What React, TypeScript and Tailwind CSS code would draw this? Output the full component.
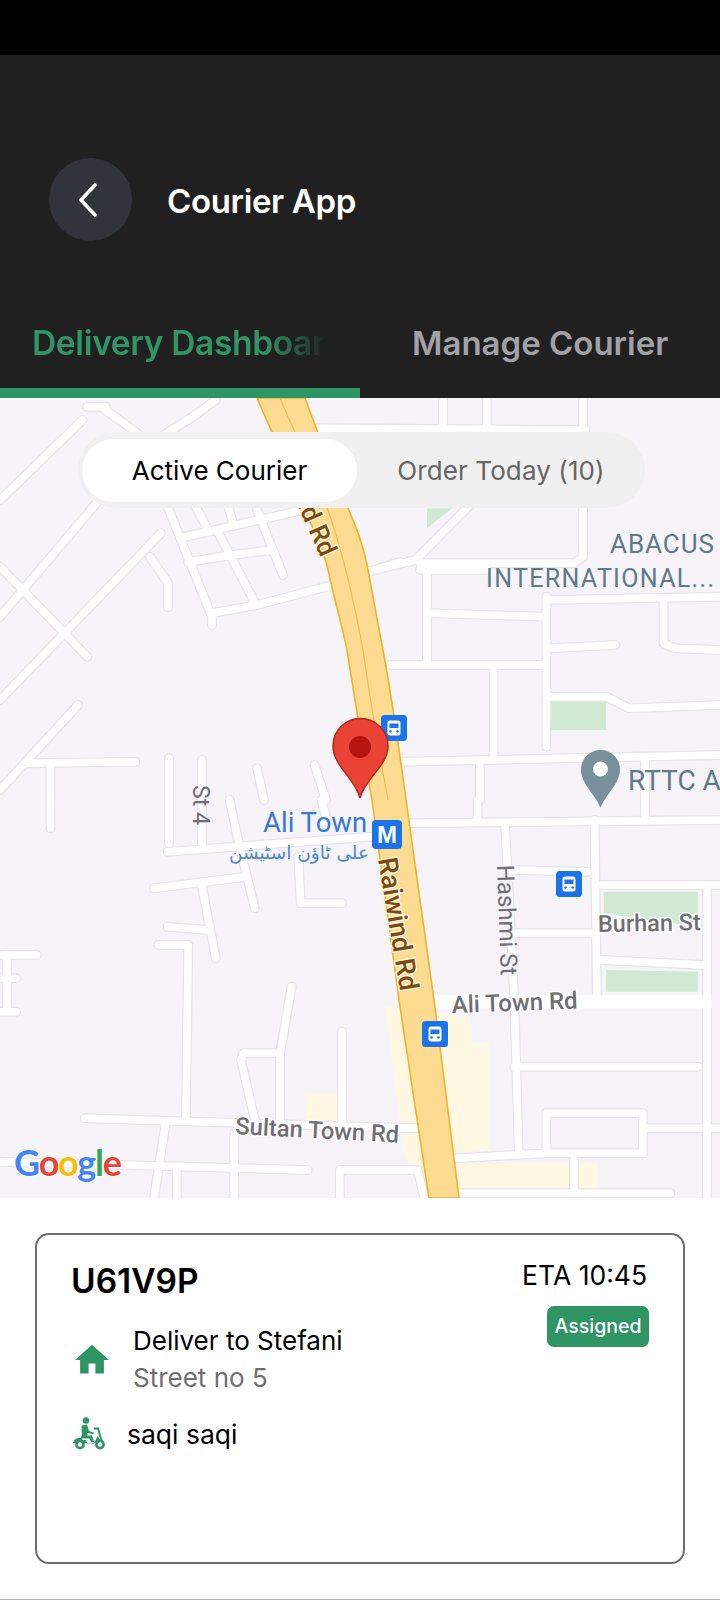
import React from "react";

const z2 = (s: string) =>
  s.split(" ").map((p) => { const [x, y] = p.split(",").map(Number); return `${(x / 2.178).toFixed(1)},${(400 + y / 3).toFixed(1)}`; }).join(" ");
const z3 = (s: string) =>
  s.split(" ").map((p) => { const [x, y] = p.split(",").map(Number); return `${(x / 2.178).toFixed(1)},${(800 + y / 3).toFixed(1)}`; }).join(" ");

const roads: string[] = [
  "167,505 212,617 212,625", "213,613 257,605 333,585", "180,538 303,510", "188,562 233,555 272,550",
  "218,532 255,603", "257,510 283,575", "195,505 207,528", "228,505 233,523",
  "150,557 168,583 168,607", "368,572 400,562",
  ...[
    "680,85 1275,90", "965,0 965,85", "1060,0 1060,90", "1270,0 1270,100",
    "1270,320 1270,470 1250,490 915,490", "1020,320 905,480 800,515",
    "180,60 0,300", "220,20 300,100", "190,20 230,20", "420,50 340,120", "470,0 420,50",
    "0,500 190,770", "0,650 210,310", "0,900 350,400",
    "930,510 930,780", "850,795 1190,795", "940,640 1185,650", "1190,590 1190,1040", "1190,600 1568,590",
    "1195,745 1340,735", "1445,610 1445,730 1470,745 1568,750", "1190,890 1320,890 1370,925 1568,915",
    "1075,800 1075,1080", "870,1085 1568,1065", "915,510 1060,510", "1045,1090 1045,1200", "1405,1080 1405,1200",
    "170,915 60,1080 0,1170", "60,1090 295,1085", "110,1100 110,1200", "368,1075 368,1200", "440,1080 440,1200",
    "560,1105 575,1200", "685,1095 710,1200",
  ].map(z2),
  ...[
    "110,0 110,85", "368,0 368,130", "440,0 440,130", "500,0 520,130 555,325", "700,0 710,50",
    "365,155 810,110", "335,265 535,230", "440,260 470,475", "365,380 450,390", "650,170 655,310 745,310",
    "345,435 410,435 405,950", "0,465 80,465", "0,535 35,535", "0,635 35,635", "15,465 15,635",
    "635,560 610,760 530,760 525,780 555,960", "610,760 610,970", "745,695 745,975",
    "185,955 905,985", "360,975 335,1200", "510,1000 510,1200", "0,1085 670,1110", "385,1100 385,1200",
    "740,1200 740,1110 910,1110 925,1200", "890,70 1568,60", "1100,75 1120,590 1130,1060", "1295,60 1300,590",
    "1115,210 1280,215", "1310,255 1568,255", "1125,400 1300,400", "1310,480 1530,495", "1540,270 1540,1200",
    "1120,800 1520,800", "995,1075 1190,1060 1190,940 1400,940 1400,1060", "1400,985 1568,985", "1000,1180 1460,1180",
    "1250,1080 1250,1170", "1405,0 1405,50", "1040,0 1040,55", "1190,1060 1400,1060",
  ].map(z3),
];

const BusIcon = ({ x, y }: { x: number; y: number }) => (
  <g transform={`translate(${x} ${y})`}>
    <rect width="26" height="26" rx="3.5" fill="#1a73e8" />
    <rect x="6.5" y="5.5" width="13" height="15" rx="2.5" fill="#fff" />
    <rect x="8.5" y="8.5" width="9" height="4.5" fill="#1a73e8" />
    <circle cx="9.5" cy="16.5" r="1.3" fill="#1a73e8" />
    <circle cx="16.5" cy="16.5" r="1.3" fill="#1a73e8" />
  </g>
);

const haloClass = "[paint-order:stroke] [stroke-linejoin:round]";

function MapArt() {
  return (
    <svg viewBox="0 398 720 800" className="block h-[800px] w-full bg-[#f6f4f8]" style={{ fontFamily: "Roboto, sans-serif" }}>
      {[
        z3("840,620 1020,650 1030,730 1065,730 1065,1050 990,1060 990,1190 930,1190 880,1060"),
        z3("665,880 735,880 735,970 665,960"),
        z3("1000,1090 1300,1090 1300,1165 1000,1165"),
      ].map((p) => <polygon key={p} points={p} fill="#fef8e3" />)}
      {[
        z3("1315,275 1520,275 1520,380 1315,340"),
        z3("1320,510 1520,515 1520,575 1320,575"),
        z2("1195,905 1320,905 1320,990 1195,990"),
        z2("930,325 985,325 930,385"),
      ].map((p) => <polygon key={p} points={p} fill="#cfe9d3" />)}

      {roads.map((r, i) => <polyline key={`o${i}`} points={r} fill="none" stroke="#e6e4e9" strokeWidth="10" strokeLinecap="round" strokeLinejoin="round" />)}
      {roads.map((r, i) => <polyline key={`i${i}`} points={r} fill="none" stroke="#ffffff" strokeWidth="7.5" strokeLinecap="round" strokeLinejoin="round" />)}
      <polyline points={z3("945,605 1550,605")} fill="none" stroke="#fff" strokeWidth="13" />

      <path
        d="M257 398 C 275 440 292 475 305 510 C 318 540 325 555 328 570 C 337 610 342 625 347 650 C 355 700 362 745 372 800 L 399 1000 L 429 1198 L 459 1198 L 434 1000 L 406 800 C 398 740 392 700 383 650 C 377 620 372 590 367 565 C 362 540 355 525 348 508 C 335 475 320 440 305 398 Z"
        fill="#fddb90" stroke="#edb32b" strokeWidth="1.6"
      />
      <path d="M280 398 C 300 445 318 480 328 510 C 340 545 352 590 363 650 C 370 700 378 745 388 800" fill="none" stroke="#e9bd58" strokeWidth="1.2" />

      <text textAnchor="end" transform="translate(321 558) rotate(66)" fontSize="26" fontWeight="500" fill="#7c4a0f" stroke="#fdf3dc" strokeWidth="3" className={haloClass}>Raiwind Rd</text>
      <text transform="translate(378 859) rotate(80.5)" fontSize="27" fontWeight="500" fill="#7c4a0f" stroke="#fdf3dc" strokeWidth="3" className={haloClass}>Raiwind Rd</text>

      <text x="714" y="553" textAnchor="end" fontSize="26" fill="#5f7a8a" textLength="104">ABACUS</text>
      <text x="714" y="587" textAnchor="end" fontSize="25" fill="#5f7a8a" textLength="228">INTERNATIONAL...</text>
      <text x="628" y="790" fontSize="28" fill="#5f7a8a">RTTC A</text>

      <text x="263" y="832" fontSize="27.5" fill="#3a78d4">Ali Town</text>
      <text x="369" y="859" direction="rtl" fontSize="18.5" fill="#4f86d8" style={{ fontFamily: "'DejaVu Sans', sans-serif" }}>علی ٹاؤن اسٹیشن</text>

      <text transform="translate(193 785) rotate(90)" fontSize="23" fill="#6f6f73" stroke="#f6f4f8" strokeWidth="3" className={haloClass}>St 4</text>
      <text transform="translate(497 865) rotate(88)" fontSize="24" fill="#6f6f73" stroke="#f6f4f8" strokeWidth="3" className={haloClass}>Hashmi St</text>
      <text transform="translate(598 932) rotate(-1)" fontSize="23.5" fontWeight="500" fill="#6f6f73" stroke="#fff" strokeWidth="3" className={haloClass}>Burhan St</text>
      <text transform="translate(452 1013) rotate(-2)" fontSize="24" fontWeight="500" fill="#6f6f73" stroke="#fff" strokeWidth="3" className={haloClass}>Ali Town Rd</text>
      <text transform="translate(235 1134) rotate(3)" fontSize="23.7" fontWeight="500" fill="#6f6f73" stroke="#fff" strokeWidth="3" className={haloClass}>Sultan Town Rd</text>

      <text x="14" y="1176" fontSize="36" fontWeight="700" textLength="108" stroke="#ffffff" strokeWidth="2" className={haloClass} style={{ fontFamily: "Lato, sans-serif" }}>
        <tspan fill="#4285f4">G</tspan><tspan fill="#ea4335">o</tspan><tspan fill="#fbbc05">o</tspan><tspan fill="#4285f4">g</tspan><tspan fill="#34a853">l</tspan><tspan fill="#ea4335">e</tspan>
      </text>

      <BusIcon x={381} y={715} />
      <BusIcon x={556} y={871} />
      <BusIcon x={422} y={1021} />
      <g transform="translate(372 820)">
        <rect width="30" height="29" rx="4" fill="#1a73e8" />
        <text x="15" y="23" textAnchor="middle" fontSize="24" fontWeight="700" fill="#fff" style={{ fontFamily: "'Liberation Sans', sans-serif" }}>M</text>
      </g>

      <path d="M600.5 808 C596 795 581 784 581 769.5 A19.5 19.5 0 0 1 620 769.5 C620 784 605 795 600.5 808 Z" fill="#78909c" />
      <circle cx="600.5" cy="769" r="7.5" fill="#fff" />

      <path d="M360 798 C355 778 333 766 333 746 A27.5 27.5 0 0 1 388 746 C388 766 365 778 360 798 Z" fill="#ea4335" stroke="#b3261e" strokeWidth="1.5" />
      <circle cx="360" cy="747" r="11" fill="#b5140f" />
    </svg>
  );
}

export default function App() {
  return (
    <div className="flex h-[1600px] w-[720px] flex-col overflow-hidden bg-white" style={{ fontFamily: "Inter, sans-serif" }}>
      <div className="h-[55px] shrink-0 bg-black" />

      <div className="flex h-[343px] shrink-0 flex-col bg-[#202020]">
        <div className="mt-[103px] flex h-[83px] items-center pl-[49px]">
          <button className="flex h-[83px] w-[83px] items-center justify-center rounded-full bg-[#31343b]">
            <svg width="24" height="36" viewBox="0 0 24 36" fill="none" className="mr-[5px]">
              <path d="M19 3 L5 18 L19 33" stroke="#fff" strokeWidth="3.6" strokeLinecap="round" strokeLinejoin="round" />
            </svg>
          </button>
          <h1 className="ml-[35px] mt-[3px] text-[33px] font-semibold leading-[40px] tracking-[-0.35px] text-white">Courier App</h1>
        </div>
        <div className="mt-auto flex h-[89px]">
          <div className="flex w-[360px] flex-col">
            <div className="mb-[10px] flex flex-1 items-center overflow-hidden pl-[32px] [mask-image:linear-gradient(to_right,black_265px,transparent_328px)]">
              <span className="whitespace-nowrap text-[33.5px] font-semibold tracking-[-0.35px] text-[#2f9565]">Delivery Dashboard</span>
            </div>
            <div className="h-[10px] bg-[#2f9565]" />
          </div>
          <div className="flex flex-1 flex-col">
            <div className="mb-[10px] flex flex-1 items-center pl-[52px]">
              <span className="whitespace-nowrap text-[33px] font-semibold text-[#a1a1a6]">Manage Courier</span>
            </div>
            <div className="h-[10px]" />
          </div>
        </div>
      </div>

      <div className="relative h-[800px] shrink-0">
        <MapArt />
        <div className="absolute left-[78px] top-[34px] flex h-[76px] w-[567px] items-center rounded-[38px] bg-[#f0f0f0] pl-[4px]">
          <div className="flex h-[63px] w-[275px] items-center justify-center rounded-[32px] bg-white text-[26px] text-black">Active Courier</div>
          <div className="flex flex-1 items-center justify-center text-[26px] tracking-[0.1px] text-[#666666]">Order Today (10)</div>
        </div>
      </div>

      <div className="flex flex-1 flex-col">
        <div className="mx-[35px] mt-[35px] flex h-[331px] rounded-[14px] border-2 border-[#6e6e6e] pl-[34px] pr-[34px]">
          <div className="flex-1">
            <div className="mt-[27px] text-[33.5px] font-semibold leading-[38px] text-black">U61V9P</div>
            <div className="mt-[23px] flex items-center">
              <svg width="34" height="34" viewBox="2 3 20 18" className="ml-[4px]" fill="#2f9565">
                <path d="M10 20v-6h4v6h5v-8h3L12 3 2 12h3v8z" />
              </svg>
              <div className="ml-[24px]">
                <div className="text-[26px] leading-[36px] text-black">Deliver to Stefani</div>
                <div className="mt-[1px] text-[26px] leading-[36px] text-[#6f6f6f]">Street no 5</div>
              </div>
            </div>
            <div className="mt-[20px] flex items-center">
              <svg width="34" height="34" viewBox="0 0 34 34" fill="none" className="ml-[1px]">
                <circle cx="14" cy="3.5" r="3.2" fill="#2f9565" />
                <path d="M9.5 8.5 15 7.5 17 14 22 15.5 21 17 15 16 15.5 18.5 20 18.5 22 25 19 25 17.5 21.5 10 21.5Z" fill="#2f9565" />
                <path d="M22 11.5 26 11.5 27 15 30 25" stroke="#2f9565" strokeWidth="2" />
                <path d="M1 26c1-4 3-5 8-5v-1.5h1V23h4l1.5 3.5H22L25.5 19l4.5 7H1z" fill="#2f9565" />
                <circle cx="8" cy="27.5" r="3.6" fill="#fff" stroke="#2f9565" strokeWidth="2.6" />
                <circle cx="28" cy="27.5" r="3.6" fill="#fff" stroke="#2f9565" strokeWidth="2.6" />
              </svg>
              <div className="ml-[21px] text-[26.5px] leading-[36px] text-black">saqi saqi</div>
            </div>
          </div>
          <div className="flex flex-col items-end">
            <div className="mr-[2px] mt-[23px] text-[26.5px] leading-[34px] text-black">ETA 10:45</div>
            <div className="mt-[14px] flex h-[41px] w-[102px] items-center justify-center rounded-[7px] bg-[#2f9565] text-[19.5px] font-medium text-white">Assigned</div>
          </div>
        </div>
        <div className="mt-auto h-px bg-[#b5b5b5]" />
      </div>
    </div>
  );
}
